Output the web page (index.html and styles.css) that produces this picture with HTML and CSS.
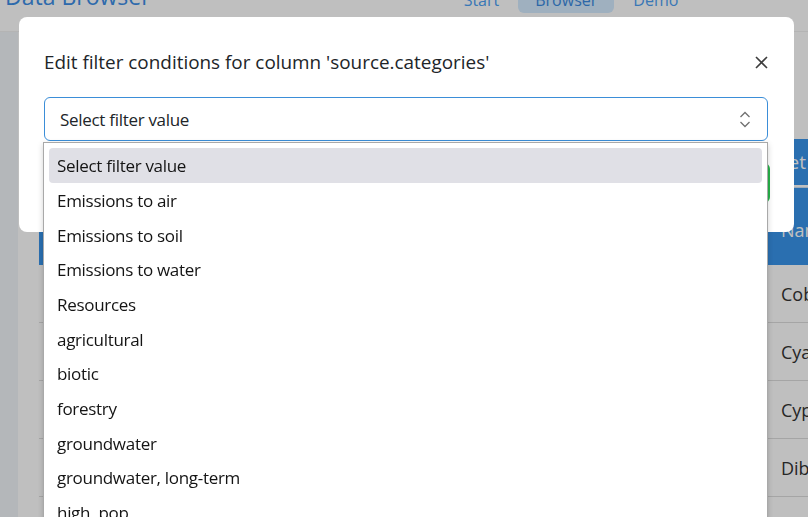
FILE: index.html
```html
<!DOCTYPE html>
<html lang="en">
<head>
<meta charset="utf-8">
<title>Data Browser</title>
<link rel="stylesheet" href="styles.css">
</head>
<body>
<div class="page">
  <header class="navbar">
    <div class="brand">Data Browser</div>
    <nav class="nav">
      <a class="nav-link">Start</a>
      <a class="nav-link active">Browser</a>
      <a class="nav-link">Demo</a>
    </nav>
  </header>
  <div class="main">
    <aside class="sidebar"></aside>
    <section class="content">
      <div class="toolbar">
        <button class="btn-reset">Reset</button>
      </div>
      <div class="table">
        <div class="thead">
          <div class="cell first"></div>
          <div class="cell">Name</div>
        </div>
        <div class="trow"><div class="cell first"></div><div class="cell">Cobalt</div></div>
        <div class="trow"><div class="cell first"></div><div class="cell">Cyanide</div></div>
        <div class="trow"><div class="cell first"></div><div class="cell">Cypermethrin</div></div>
        <div class="trow"><div class="cell first"></div><div class="cell">Dibutyl</div></div>
      </div>
    </section>
  </div>
</div>

<div class="backdrop"></div>

<div class="modal">
  <div class="modal-header">
    <h5 class="modal-title">Edit filter conditions for column 'source.categories'</h5>
    <button class="btn-close" aria-label="Close">
      <svg width="13" height="13" viewBox="0 0 13 13"><path d="M1 1L12 12M12 1L1 12" stroke="#3d3d3d" stroke-width="1.6" fill="none"/></svg>
    </button>
  </div>
  <div class="modal-body">
    <div class="select">
      <span>Select filter value</span>
      <svg class="chev" width="12" height="17" viewBox="0 0 12 17"><path d="M1.5 6L6 1.5L10.5 6M1.5 11L6 15.5L10.5 11" stroke="#707070" stroke-width="1.3" fill="none"/></svg>
    </div>
    <div class="actions">
      <button class="btn-apply">Apply</button>
    </div>
  </div>
</div>

<div class="listbox">
  <div class="opt selected">Select filter value</div>
  <div class="opt">Emissions to air</div>
  <div class="opt">Emissions to soil</div>
  <div class="opt">Emissions to water</div>
  <div class="opt">Resources</div>
  <div class="opt">agricultural</div>
  <div class="opt">biotic</div>
  <div class="opt">forestry</div>
  <div class="opt">groundwater</div>
  <div class="opt">groundwater, long-term</div>
  <div class="opt">high. pop</div>
  <div class="opt">indoor</div>
</div>
</body>
</html>
```
FILE: styles.css
```css
html, body {
  margin: 0;
  padding: 0;
  height: 100%;
  overflow: hidden;
}
body {
  font-family: "Open Sans", "Noto Sans", sans-serif;
  color: #212529;
  background: #fff;
}
.page {
  width: 808px;
  height: 517px;
  overflow: hidden;
}
.navbar {
  height: 31px;
  display: flex;
  align-items: flex-start;
  background: #fff;
  border-bottom: 1px solid #f0f0f0;
}
.brand {
  margin-top: -20px;
  margin-left: 5px;
  font-size: 23px;
  line-height: 32px;
  color: #3d8ee6;
  flex: 0 0 auto;
}
.nav {
  display: flex;
  margin-left: 296px;
  margin-top: -12px;
}
.nav-link {
  font-size: 16px;
  line-height: 25px;
  padding: 0 17px;
  color: #4d9ff3;
  border-radius: 6px;
}
.nav-link.active {
  background: #d4ebff;
  color: #3b8ae0;
  margin: 0 2px;
}
.main {
  display: flex;
  height: 486px;
}
.sidebar {
  width: 18px;
  background: #f0f4f8;
}
.content {
  flex: 1;
  padding-left: 21px;
  display: flex;
  flex-direction: column;
  min-width: 0;
}
.toolbar {
  display: flex;
  justify-content: flex-end;
  padding-top: 107px;
  margin-right: -10px;
}
.btn-reset {
  height: 46px;
  border: none;
  background: #3894eb;
  color: #fff;
  font-family: inherit;
  font-size: 19px;
  padding: 0 12px;
  border-radius: 6px;
}
.table {
  margin-top: 2px;
  margin-right: -60px;
}
.thead {
  display: flex;
  height: 77px;
  background: #3894eb;
  color: #fff;
  border-top: 1px solid #d0e4f8;
}
.trow {
  display: flex;
  height: 57px;
  border-bottom: 1px solid #ddd;
}
.cell {
  display: flex;
  align-items: center;
  padding-left: 10px;
  font-size: 18px;
  flex: 1;
}
.thead .cell { padding-top: 6px; }
.cell.first {
  flex: 0 0 732px;
  padding: 0;
}
.trow .cell { color: #333; }
.backdrop {
  position: fixed;
  inset: 0;
  background: rgba(0, 0, 0, 0.25);
}
.modal {
  position: fixed;
  top: 17px;
  left: 19px;
  width: 775px;
  height: 215px;
  background: #fff;
  border-radius: 8px;
  box-sizing: border-box;
}
.modal-header {
  display: flex;
  align-items: center;
  justify-content: space-between;
  padding: 30px 26px 0 25px;
  height: 30px;
}
.modal-title {
  margin: 0;
  font-size: 18.9px;
  font-weight: 400;
  line-height: 30px;
  color: #212529;
}
.btn-close {
  border: none;
  background: none;
  padding: 0;
  width: 13px;
  height: 13px;
  display: flex;
}
.modal-body {
  padding: 20px 26px 0 25px;
}
.select {
  height: 44px;
  box-sizing: border-box;
  border: 1px solid #3b8ed8;
  border-radius: 6px;
  display: flex;
  align-items: center;
  justify-content: space-between;
  padding: 1px 16px 0 15px;
  font-size: 17px;
  letter-spacing: -0.3px;
  color: #212529;
}
.chev { display: block; }
.actions {
  display: flex;
  justify-content: flex-end;
  margin-top: 22px;
  margin-right: -2px;
}
.btn-apply {
  height: 40px;
  border: none;
  border-radius: 6px;
  background: #28b34a;
  color: #fff;
  font-family: inherit;
  font-size: 17px;
  padding: 0 16px;
}
.listbox {
  position: fixed;
  top: 142px;
  left: 43px;
  width: 725px;
  height: 400px;
  box-sizing: border-box;
  background: #fff;
  border: 1px solid #a9a9a9;
  box-shadow: 0 2px 6px rgba(0, 0, 0, 0.18);
  padding: 5px 5px 0 5px;
  overflow: hidden;
}
.opt {
  height: 34.67px;
  box-sizing: border-box;
  padding-top: 1px;
  display: flex;
  align-items: center;
  padding-left: 8px;
  font-size: 17px;
  letter-spacing: -0.3px;
  color: #141414;
  border-radius: 4px;
}
.opt.selected {
  background: #e0e0e6;
}
```
